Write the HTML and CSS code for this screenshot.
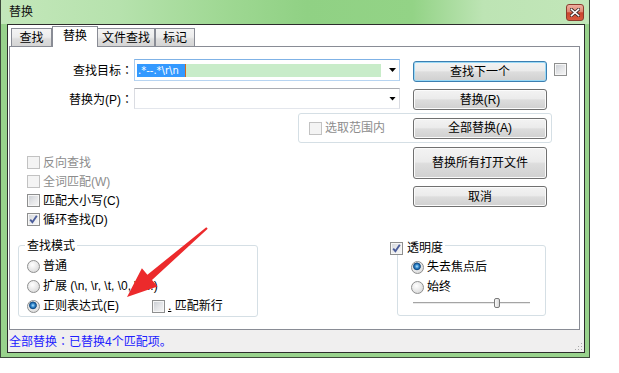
FILE: index.html
```html
<!DOCTYPE html>
<html lang="zh-CN">
<head>
<meta charset="utf-8">
<title>替换</title>
<link rel="stylesheet" href="styles.css">
</head>
<body>
<div class="window">
  <div class="titlebar">
    <span class="title">替换</span>
    <span class="close"><svg width="10" height="9" viewBox="0 0 10 9"><path d="M1.5 1.5 L8.5 7.5 M8.5 1.5 L1.5 7.5" stroke="#3a2a28" stroke-width="3.2" stroke-linecap="square"/><path d="M1.5 1.5 L8.5 7.5 M8.5 1.5 L1.5 7.5" stroke="#ffffff" stroke-width="1.6" stroke-linecap="square"/></svg></span>
  </div>
  <div class="frame">
    <div class="client">
      <div class="tabs">
        <div class="tab t1">查找</div>
        <div class="tab t2 active">替换</div>
        <div class="tab t3">文件查找</div>
        <div class="tab t4">标记</div>
      </div>
      <div class="panel">
        <div class="row row-find">
          <div class="lbl">查找目标<span class="colon" lang="zh-TW">：</span></div>
          <div class="combo focus">
            <div class="edit"><span class="sel">.*--.*\r\n</span><span class="caret"></span></div>
            <span class="drop"></span>
          </div>
          <button class="btn default">查找下一个</button>
          <span class="cb side"></span>
        </div>
        <div class="row row-repl">
          <div class="lbl">替换为(P)<span class="colon" lang="zh-TW">：</span></div>
          <div class="combo">
            <div class="edit blank"></div>
            <span class="drop"></span>
          </div>
          <button class="btn">替换(R)</button>
        </div>
        <div class="scope">
          <div class="check disabled"><span class="cb"></span><span>选取范围内</span></div>
          <button class="btn">全部替换(A)</button>
        </div>
        <div class="mid">
          <div class="opts">
            <div class="check disabled"><span class="cb"></span><span>反向查找</span></div>
            <div class="check disabled"><span class="cb"></span><span>全词匹配(W)</span></div>
            <div class="check"><span class="cb"></span><span>匹配大小写(C)</span></div>
            <div class="check"><span class="cb on"><svg width="11" height="11" viewBox="0 0 11 11"><path d="M2.2 5.6 L4.4 8.2 L8.8 1.8" stroke="#4b5d9b" stroke-width="1.9" fill="none"/></svg></span><span>循环查找(D)</span></div>
          </div>
          <div class="btncol">
            <button class="btn tall">替换所有打开文件</button>
            <button class="btn">取消</button>
          </div>
        </div>
        <div class="groups">
          <div class="group mode">
            <div class="legend">查找模式</div>
            <div class="radio-row first"><span class="rb"></span><span>普通</span></div>
            <div class="radio-row"><span class="rb"></span><span>扩展 (\n, \r, \t, \0, \x...)</span></div>
            <div class="radio-row">
              <div class="re-item"><span class="rb on"></span><span>正则表达式(E)</span></div>
              <div class="check nl"><span class="cb"></span><span><u>.</u> 匹配新行</span></div>
            </div>
          </div>
          <div class="group trans">
            <div class="legend check"><span class="cb on"><svg width="11" height="11" viewBox="0 0 11 11"><path d="M2.2 5.6 L4.4 8.2 L8.8 1.8" stroke="#4b5d9b" stroke-width="1.9" fill="none"/></svg></span><span>透明度</span></div>
            <div class="radio-row first"><span class="rb on"></span><span>失去焦点后</span></div>
            <div class="radio-row"><span class="rb"></span><span>始终</span></div>
            <div class="slider"><span class="thumb"></span></div>
          </div>
        </div>
      </div>
      <div class="status">
        <span class="status-text">全部替换<span class="colon-s" lang="zh-TW">：</span>已替换4个匹配项。</span>
        <svg class="grip" width="8" height="8" viewBox="0 0 8 8"><g fill="#a9a9a9"><rect x="6" y="0" width="1" height="1"/><rect x="6" y="3" width="1" height="1"/><rect x="3" y="3" width="1" height="1"/><rect x="6" y="6" width="1" height="1"/><rect x="3" y="6" width="1" height="1"/><rect x="0" y="6" width="1" height="1"/></g></svg>
      </div>
    </div>
  </div>
</div>
<svg class="annot" width="619" height="373" viewBox="0 0 619 373">
  <polygon points="207.7,228.8 152.0,280.0 157.5,286.5 127,297 141.9,268.3 147.4,274.8 206.3,227.2" fill="#ec2a2c"/>
</svg>
</body>
</html>
```

FILE: styles.css
```css
* { box-sizing: border-box; }
html, body { margin: 0; padding: 0; background: #fff; }
body {
  font-family: "Liberation Sans", "Noto Sans CJK SC", sans-serif;
  font-size: 12px;
  line-height: 14px;
  color: #000;
  position: relative;
  width: 619px;
  height: 373px;
  overflow: hidden;
}

.window {
  width: 590px;
  height: 358px;
  border: 1px solid #3e4a3c;
  border-top: 0;
  background: #98d28c;
  display: flex;
  flex-direction: column;
}
.titlebar {
  height: 24px;
  flex: none;
  display: flex;
  align-items: center;
  padding-left: 8px;
  background: linear-gradient(90deg, #c3e7ba 0%, #b6e2ad 20%, #9fd893 38%, #90d184 52%, #93d386 70%, #bde4b4 82%, #c2e6b9 100%);
}
.title { font-size: 12px; color: #101010; }
.close {
  margin-left: auto;
  margin-right: 5px;
  width: 18px;
  height: 17px;
  border: 1px solid #8c3c2e;
  border-radius: 3px;
  background: linear-gradient(#eeb0a0, #df8a74 45%, #c9452e 52%, #d85a3e);
  display: flex;
  align-items: center;
  justify-content: center;
}
.frame {
  flex: 1;
  display: flex;
  padding: 0 4px 4px 6px;
}
.client {
  flex: 1;
  border: 1px solid #2c2c2c;
  background: #fff;
  display: flex;
  flex-direction: column;
}

/* tabs */
.tabs {
  display: flex;
  align-items: flex-end;
  height: 21px;
  margin: 1px 0 -1px 3px;
  flex: none;
}
.tab {
  height: 19px;
  border: 1px solid #898c95;
  border-bottom: 0;
  background: linear-gradient(#f4f4f4, #ececec 45%, #dedede 55%, #d3d3d3);
  text-align: center;
  padding-top: 2px;
}
.t1 { width: 41px; }
.t2 { width: 46px; margin-left: 0; }
.t3 { width: 58px; margin-left: -1px; }
.t4 { width: 40px; margin-left: 0; }
.tab.active {
  height: 21px;
  background: #fff;
  position: relative;
  z-index: 1;
  padding-top: 2px;
}

.panel {
  margin: 0 4px 0 1px;
  border: 1px solid #898c95;
  height: 284px;
  flex: none;
  display: flex;
  flex-direction: column;
  background: #fff;
}

/* rows */
.row { display: flex; align-items: flex-start; flex: none; }
.row-find { margin-top: 12px; height: 22px; }
.row-repl { margin-top: 7px; height: 21px; }
.lbl { width: 120px; text-align: right; line-height: 22px; white-space: nowrap; }
.row-repl .lbl { line-height: 21px; }
.colon { font-family: "Noto Sans CJK TC", sans-serif; margin-right: -3px; }
.colon-s { font-family: "Noto Sans CJK TC", sans-serif; }
.combo {
  margin-left: 4px;
  width: 266px;
  height: 22px;
  border: 1px solid #b5b7bd;
  border-color: #abadb3 #dadce2 #e3e6ec #dadce2;
  display: flex;
  align-items: center;
  background: #fff;
}
.row-repl .combo { height: 21px; }
.combo.focus { border-color: #7fb2e6 #a9cbee #b7d4f1 #a9cbee; }
.edit {
  margin-left: 2px;
  width: 244px;
  height: 13px;
  background: #c8ecc9;
  display: flex;
}
.edit.blank { background: transparent; }
.sel {
  width: 48px;
  height: 13px;
  background: #3399ff;
  color: #fff;
  font-family: "DejaVu Sans", sans-serif;
  font-size: 10px;
  line-height: 13px;
  padding-left: 1px;
  white-space: nowrap;
  overflow: hidden;
}
.caret { width: 1px; height: 13px; background: #d4681e; }
.drop {
  margin-left: auto;
  margin-right: 3px;
  width: 7px;
  height: 4px;
  background: #000;
  clip-path: polygon(0 0, 100% 0, 50% 100%);
}

.btn {
  width: 134px;
  height: 21px;
  flex: none;
  border: 1px solid #707070;
  border-radius: 3px;
  background: linear-gradient(#f3f3f3, #ebebeb 46%, #dddddd 52%, #d0d0d0);
  box-shadow: inset 0 0 0 1px #fbfbfb;
  font: inherit;
  color: #000;
  padding: 0;
  display: flex;
  align-items: center;
  justify-content: center;
}
.btn.default {
  border-color: #3c7fb1;
  box-shadow: inset 0 0 0 1px #9ad9f6;
}
.row-find .btn { margin-left: 13px; margin-top: 2px; }
.row-repl .btn { margin-left: 13px; margin-top: 1px; }
.btn.tall { height: 32px; }

/* checkboxes */
.cb {
  width: 13px;
  height: 13px;
  flex: none;
  border: 1px solid #8e8f8f;
  background: linear-gradient(135deg, #c8ccd2 0%, #e6e7e9 55%, #f6f6f6 100%);
  box-shadow: inset 0 0 0 1px #f6f6f6;
  display: flex;
  align-items: center;
  justify-content: center;
}
.cb.on { background: linear-gradient(135deg, #d2d5da 0%, #eceded 55%, #f8f8f8 100%); }
.cb.side { margin-left: 7px; margin-top: 4px; }
.check { display: flex; align-items: center; gap: 3px; }
.check.disabled { color: #8d8d8d; }
.check.disabled .cb { border-color: #c2c2c2; background: #f4f4f4; box-shadow: none; }

.scope {
  margin: 4px 0 0 288px;
  width: 254px;
  height: 30px;
  flex: none;
  border: 1px solid #d5dfe5;
  border-radius: 3px;
  display: flex;
  align-items: center;
  padding: 0 4px 0 10px;
}
.scope .btn { margin-left: auto; }

.mid { display: flex; margin-top: 4px; flex: none; }
.opts { margin-left: 17px; padding-top: 6px; width: 386px; display: flex; flex-direction: column; }
.opts .check { height: 19px; }
.btncol { display: flex; flex-direction: column; gap: 7px; }

/* groups */
.groups { display: flex; align-items: flex-start; margin-top: 16px; flex: none; }
.group {
  border: 1px solid #d5dfe5;
  border-radius: 3px;
  display: flex;
  flex-direction: column;
  align-items: flex-start;
}
.group.mode { margin-left: 8px; width: 240px; height: 72px; }
.group.trans { margin-left: 139px; width: 149px; height: 71px; }
.legend { background: #fff; height: 14px; }
.mode .legend { margin: -7px 0 0 6px; padding: 0 2px; }
.trans .legend { margin: -5px 0 0 -8px; padding-right: 2px; gap: 4px; }

.radio-row { display: flex; align-items: center; gap: 3px; height: 20px; }
.mode .radio-row { padding-left: 8px; }
.mode .radio-row.first { margin-top: 3px; }
.trans .radio-row { padding-left: 13px; }
.trans .radio-row.first { margin-top: 2px; }
.re-item { display: flex; align-items: center; gap: 3px; width: 122px; }
.nl u { text-decoration-thickness: 1px; }

.rb {
  width: 13px;
  height: 13px;
  flex: none;
  border-radius: 50%;
  border: 1px solid #8e8f8f;
  background: radial-gradient(circle at 40% 35%, #ffffff 0, #ebebeb 45%, #cfcfcf 100%);
}
.rb.on {
  background:
    radial-gradient(circle at 45% 40%, #b8e6ff 0, #3f94d6 1.6px, #0d4f8e 3.2px, #5f7d9a 3.8px, transparent 4.2px),
    radial-gradient(circle at 40% 35%, #ffffff 0, #ebebeb 45%, #cfcfcf 100%);
}

.slider {
  margin: 1px 0 0 15px;
  width: 117px;
  height: 10px;
  display: flex;
  background: linear-gradient(to bottom, transparent 4px, #a4a4a4 4px, #a4a4a4 5px, #e9e9e9 5px, #e9e9e9 6px, transparent 6px);
}
.thumb {
  margin-left: 81px;
  width: 6px;
  height: 10px;
  border: 1px solid #7a7a7a;
  border-radius: 2px;
  background: linear-gradient(90deg, #fafafa, #d8d8d8);
}

/* status */
.status {
  flex: 1;
  background: #f0efef;
  display: flex;
  align-items: center;
  padding-left: 1px;
}
.status-text { color: #2020ff; }
.grip { margin: auto 1px 1px auto; }

.annot { position: absolute; left: 0; top: 0; pointer-events: none; }
```
